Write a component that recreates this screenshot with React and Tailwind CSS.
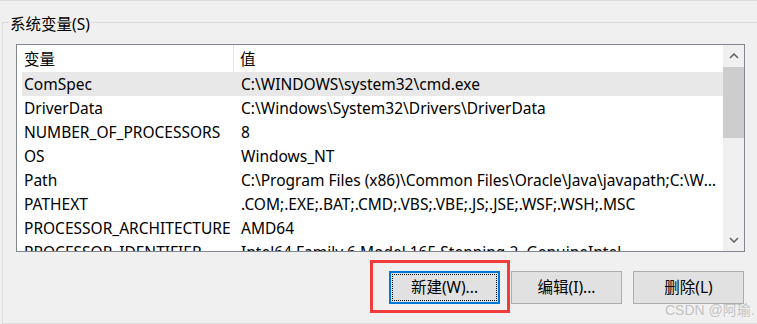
const rows = [
  ["ComSpec", "C:\\WINDOWS\\system32\\cmd.exe"],
  ["DriverData", "C:\\Windows\\System32\\Drivers\\DriverData"],
  ["NUMBER_OF_PROCESSORS", "8"],
  ["OS", "Windows_NT"],
  ["Path", "C:\\Program Files (x86)\\Common Files\\Oracle\\Java\\javapath;C:\\WINDOWS\\system32;C:\\WINDOWS"],
  ["PATHEXT", ".COM;.EXE;.BAT;.CMD;.VBS;.VBE;.JS;.JSE;.WSF;.WSH;.MSC"],
  ["PROCESSOR_ARCHITECTURE", "AMD64"],
  ["PROCESSOR_IDENTIFIER", "Intel64 Family 6 Model 165 Stepping 2, GenuineIntel"],
];

function Chevron({ down }) {
  return (
    <svg width="10" height="6" viewBox="0 0 10 6" className="block">
      <path
        d={down ? "M1 1 L5 5 L9 1" : "M1 5 L5 1 L9 5"}
        fill="none"
        stroke="#606060"
        strokeWidth="1.5"
      />
    </svg>
  );
}

export default function App() {
  return (
    <div className="relative w-[757px] h-[324px] overflow-hidden bg-[#f0f0f0] border-t border-[#dcdcdc] pt-[11px] text-[15.5px] text-black font-['Noto_Sans','Noto_Sans_CJK_SC',sans-serif]">
      <fieldset className="ml-[2px] w-[780px] h-[312px] border border-[#dcdcdc]">
        <legend className="ml-[6px] px-[1px] leading-[20px]">
          <span className="relative top-[2px]">系统变量(S)</span>
        </legend>

        {/* list view */}
        <div className="ml-[13px] mt-[12px] w-[729px] h-[208px] border border-[#828790] bg-white flex overflow-hidden">
          <div className="flex-1 min-w-0 pl-[5px]">
            <div className="flex h-[27px] items-center">
              <div className="w-[212px] pl-[2px] pt-[3px] h-full flex items-center border-r border-[#e5e5e5]">变量</div>
              <div className="pl-[6px] pt-[3px]">值</div>
            </div>
            {rows.map(([name, value], i) => (
              <div
                key={name}
                className={`flex h-[24px] pt-[2px] items-center ${i === 0 ? "bg-[#e8e8e8]" : ""}`}
              >
                <div className="w-[213px] pl-[2px] whitespace-nowrap overflow-hidden">{name}</div>
                <div className="flex-1 min-w-0 pl-[6px] pr-[6px] truncate">{value}</div>
              </div>
            ))}
          </div>

          {/* scrollbar */}
          <div className="w-[21px] h-full bg-[#f0f0f0] flex flex-col">
            <div className="h-[22px] flex items-center justify-center">
              <Chevron />
            </div>
            <div className="h-[71px] bg-[#cdcdcd]" />
            <div className="flex-1" />
            <div className="h-[22px] flex items-center justify-center">
              <Chevron down />
            </div>
          </div>
        </div>

        {/* buttons */}
        <div className="mt-[19px] w-[741px] flex justify-end gap-[11px]">
          <div className="relative">
            <button className="w-[111px] h-[33px] bg-[#e1e1e1] border-2 border-[#0078d7] p-[1px]">
              <span className="flex w-full h-full pt-[1px] items-center justify-center border border-dotted border-black">
                新建(W)...
              </span>
            </button>
            <div className="absolute left-[-19px] top-[-11px] w-[140px] h-[53px] border-[3px] border-[#f23b3b]" />
          </div>
          <button className="w-[111px] h-[33px] pt-[1px] bg-[#e1e1e1] border border-[#adadad]">编辑(I)...</button>
          <button className="w-[111px] h-[33px] pt-[1px] bg-[#e1e1e1] border border-[#adadad]">删除(L)</button>
        </div>
      </fieldset>

      <div className="absolute left-[665px] top-[300px] text-[14px] leading-[18px] text-[#c4c4c4] font-['Liberation_Sans','Noto_Sans_CJK_SC',sans-serif]">
        CSDN @阿瑜.
      </div>
    </div>
  );
}
